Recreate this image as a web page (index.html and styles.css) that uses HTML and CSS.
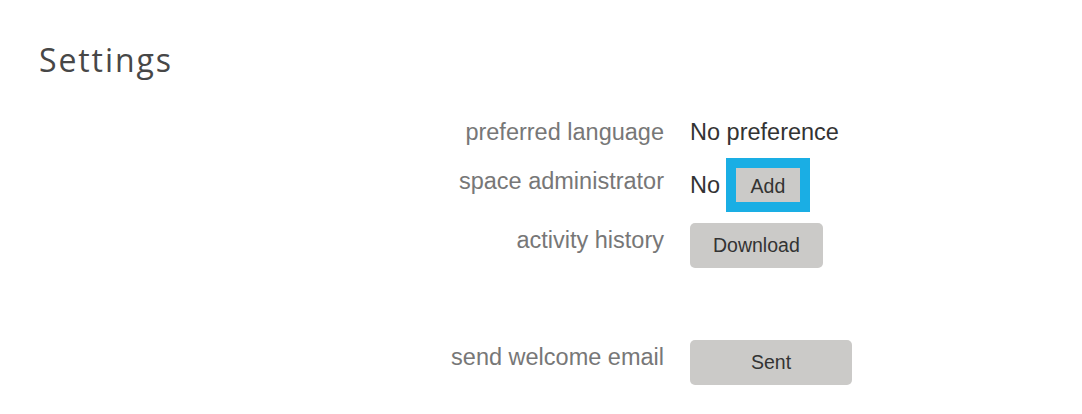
FILE: index.html
```html
<!DOCTYPE html>
<html lang="en">
<head>
<meta charset="utf-8">
<title>Settings</title>
<link rel="stylesheet" href="styles.css">
</head>
<body>
<main class="page">
  <h1 class="title">Settings</h1>
  <section class="settings">
    <div class="row">
      <div class="label">preferred language</div>
      <div class="value">No preference</div>
    </div>
    <div class="row row-admin">
      <div class="label">space administrator</div>
      <div class="value value-inline">
        <span>No</span>
        <button class="btn btn-add" type="button">Add</button>
      </div>
    </div>
    <div class="row row-button">
      <div class="label">activity history</div>
      <div class="value">
        <button class="btn btn-large" type="button">Download</button>
      </div>
    </div>
    <div class="row row-button row-spaced">
      <div class="label">send welcome email</div>
      <div class="value">
        <button class="btn btn-large btn-wide" type="button">Sent</button>
      </div>
    </div>
  </section>
</main>
</body>
</html>
```
FILE: styles.css
```css
html, body {
  margin: 0;
  padding: 0;
  background: #ffffff;
}

.page {
  padding: 40px 0 0 39px;
}

.title {
  margin: 0;
  font-family: "Open Sans", "DejaVu Sans", sans-serif;
  font-weight: 400;
  font-size: 32px;
  line-height: 40px;
  letter-spacing: 1.9px;
  color: #474747;
}

.settings {
  margin-top: 38px;
  display: flex;
  flex-direction: column;
  gap: 11px;
  font-family: "Liberation Sans", Arial, sans-serif;
}

.row {
  display: grid;
  grid-template-columns: 625px auto;
  column-gap: 26px;
  align-items: start;
}

.row-admin {
  margin-top: 1px;
}

.row-spaced {
  margin-top: 61px;
}

.label {
  text-align: right;
  font-size: 23.5px;
  line-height: 28px;
  color: #777777;
}

.row-admin .label {
  padding-top: 9px;
}

.row-button .label {
  padding-top: 3px;
}

.value {
  font-size: 23.5px;
  line-height: 28px;
  color: #333333;
}

.value-inline {
  display: flex;
  align-items: baseline;
}

.btn {
  font-family: "Liberation Sans", Arial, sans-serif;
  color: #333333;
  background: #cbcac8;
  border: none;
  margin: 0;
  cursor: pointer;
}

.btn-add {
  margin: 10px 0 10px 16px;
  padding: 7px 14.5px 5px;
  font-size: 19.5px;
  line-height: 22px;
  height: 34px;
  outline: 10px solid #1aaee4;
  border-radius: 0;
}

.btn-large {
  display: block;
  height: 45px;
  padding: 0 23px;
  font-size: 19.5px;
  line-height: 45px;
  border-radius: 5px;
}

.btn-wide {
  width: 162px;
  padding: 0;
  text-align: center;
}
```
